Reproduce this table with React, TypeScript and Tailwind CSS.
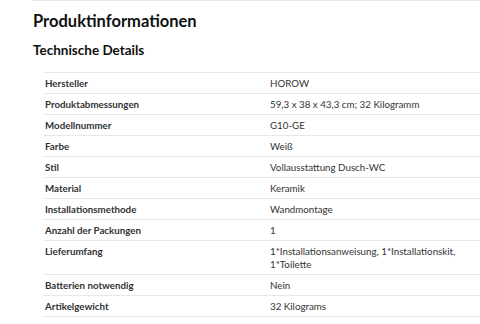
const rows: { label: string; value: string[] }[] = [
  { label: 'Hersteller', value: ['HOROW'] },
  { label: 'Produktabmessungen', value: ['59,3 x 38 x 43,3 cm; 32 Kilogramm'] },
  { label: 'Modellnummer', value: ['G10-GE'] },
  { label: 'Farbe', value: ['Weiß'] },
  { label: 'Stil', value: ['Vollausstattung Dusch-WC'] },
  { label: 'Material', value: ['Keramik'] },
  { label: 'Installationsmethode', value: ['Wandmontage'] },
  { label: 'Anzahl der Packungen', value: ['1'] },
  { label: 'Lieferumfang', value: ['1*Installationsanweisung, 1*Installationskit,', '1*Toilette'] },
  { label: 'Batterien notwendig', value: ['Nein'] },
  { label: 'Artikelgewicht', value: ['32 Kilograms'] },
];

export default function App() {
  return (
    <div className="w-[480px] h-[324px] overflow-hidden bg-white pl-[33px] text-[#0f1111] font-['Lato','Liberation_Sans',sans-serif]">
      <div className="border-t border-[#e7e7e7]" />
      <h1 className="mt-[9px] text-[16.5px] leading-[22px] font-bold">Produktinformationen</h1>
      <h2 className="mt-[9px] text-[13.5px] leading-[18px] font-bold">Technische Details</h2>

      {/* Detail table */}
      <div className="mt-[13px] ml-[11px] border-b border-[#e7e7e7]">
        {rows.map((row) => (
          <div key={row.label} className="flex border-t border-[#e7e7e7] py-[3.5px] text-[9.75px] leading-[13px]">
            <div className="w-[226px] shrink-0 pl-[1px] font-bold text-[#333]">{row.label}</div>
            <div className="text-[#333]">
              {row.value.map((line) => (
                <div key={line} className="whitespace-nowrap">{line}</div>
              ))}
            </div>
          </div>
        ))}
      </div>
    </div>
  );
}
